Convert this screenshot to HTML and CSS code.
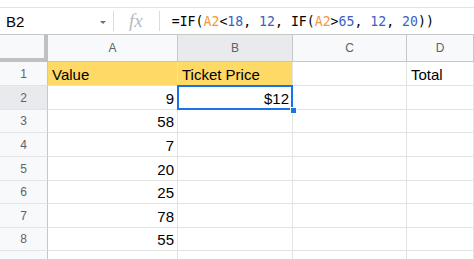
FILE: index.html
```html
<!DOCTYPE html>
<html lang="en">

<head>
	<meta charset="utf-8">
	<title>Ticket Price</title>
	<link rel="stylesheet" href="styles.css">
</head>

<body>
	<div class="toolbar-edge"></div>
	<div class="formula-bar">
		<div class="name-box">
			<span class="name-box-text">B2</span>
			<span class="caret"></span>
		</div>
		<span class="divider"></span>
		<span class="fx">fx</span>
		<span class="divider"></span>
		<div class="formula">=IF(<span class="ref">A2</span>&lt;<span class="num">18</span>, <span class="num">12</span>, IF(<span class="ref">A2</span>&gt;<span class="num">65</span>, <span class="num">12</span>, <span class="num">20</span>))</div>
	</div>
	<div class="sheet">
		<div class="corner"></div>
		<div class="col-head">A</div>
		<div class="col-head active">B</div>
		<div class="col-head">C</div>
		<div class="col-head">D</div>

		<div class="row-head">1</div>
		<div class="cell filled">Value</div>
		<div class="cell filled">Ticket Price</div>
		<div class="cell"></div>
		<div class="cell">Total</div>

		<div class="row-head active">2</div>
		<div class="cell number">9</div>
		<div class="cell number selected">$12<span class="fill-handle"></span></div>
		<div class="cell"></div>
		<div class="cell"></div>

		<div class="row-head">3</div>
		<div class="cell number">58</div>
		<div class="cell"></div>
		<div class="cell"></div>
		<div class="cell"></div>

		<div class="row-head">4</div>
		<div class="cell number">7</div>
		<div class="cell"></div>
		<div class="cell"></div>
		<div class="cell"></div>

		<div class="row-head">5</div>
		<div class="cell number">20</div>
		<div class="cell"></div>
		<div class="cell"></div>
		<div class="cell"></div>

		<div class="row-head">6</div>
		<div class="cell number">25</div>
		<div class="cell"></div>
		<div class="cell"></div>
		<div class="cell"></div>

		<div class="row-head">7</div>
		<div class="cell number">78</div>
		<div class="cell"></div>
		<div class="cell"></div>
		<div class="cell"></div>

		<div class="row-head">8</div>
		<div class="cell number">55</div>
		<div class="cell"></div>
		<div class="cell"></div>
		<div class="cell"></div>

		<!-- row 9 is only a sliver at the bottom edge -->
		<div class="row-head"></div>
		<div class="cell"></div>
		<div class="cell"></div>
		<div class="cell"></div>
		<div class="cell"></div>
	</div>
</body>

</html>
```
FILE: styles.css
```css
body {
	background-color: #FFFFFF;
	color: #000000;
	font-family: "Liberation Sans", Arial, sans-serif;
	height: 259px;
	margin: 0;
	overflow: hidden;
}

.toolbar-edge {
	height: 7px;
}

.formula-bar {
	align-items: center;
	border-bottom: 1px solid #C7C7C7;
	border-top: 1px solid #E3E3E3;
	box-sizing: border-box;
	display: flex;
	height: 28px;
}

.name-box {
	align-items: center;
	display: flex;
	width: 106px;
}

.name-box-text {
	font-size: 15px;
	padding-left: 6px;
}

.caret {
	border-left: 3px solid transparent;
	border-right: 3px solid transparent;
	border-top: 3px solid #6B6F74;
	margin-left: auto;
	margin-top: 2px;
}

.divider {
	align-self: center;
	background-color: #DADCE0;
	height: 20px;
	margin-left: 7px;
	width: 1px;
}

.fx {
	color: #B7BABF;
	font-family: "Liberation Serif", serif;
	font-size: 19px;
	font-style: italic;
	margin-left: 15px;
	margin-right: 9px;
}

.formula {
	font-family: "DejaVu Sans Mono", monospace;
	font-size: 13.2px;
	margin-left: 12px;
	white-space: nowrap;
}

.ref {
	color: #F09A3E;
}

.num {
	color: #3D5FC2;
}

.sheet {
	display: grid;
	grid-template-columns: 48px 130px 115px 114px 1fr;
	grid-template-rows: 27px 24px 24px 23px 24px 24px 23px 24px 23px 24px;
}

.corner {
	background-color: #F8F9FA;
	border-bottom: 4px solid #C0C0C0;
	border-right: 4px solid #C0C0C0;
}

.col-head,
.row-head {
	align-items: center;
	background-color: #F8F9FA;
	border-bottom: 1px solid #C7C7C7;
	border-right: 1px solid #C7C7C7;
	color: #5F6368;
	display: flex;
	font-size: 12px;
	justify-content: center;
}

.col-head.active,
.row-head.active {
	background-color: #E8EAED;
}

.row-head {
	border-bottom-color: #E2E3E3;
}

.cell {
	align-items: center;
	border-bottom: 1px solid #E2E3E3;
	border-right: 1px solid #E2E3E3;
	display: flex;
	font-size: 15px;
	padding: 1px 3px 0 4px;
	position: relative;
	white-space: nowrap;
}

.cell.number {
	justify-content: flex-end;
}

.cell.filled {
	background-color: #FFD966;
}

.cell.selected::after {
	border: 2px solid #1A73E8;
	bottom: -1px;
	content: "";
	left: -1px;
	position: absolute;
	right: -1px;
	top: -1px;
}

.fill-handle {
	background-color: #1A73E8;
	border: 1px solid #FFFFFF;
	bottom: -5px;
	height: 5px;
	position: absolute;
	right: -5px;
	width: 5px;
	z-index: 1;
}
```
